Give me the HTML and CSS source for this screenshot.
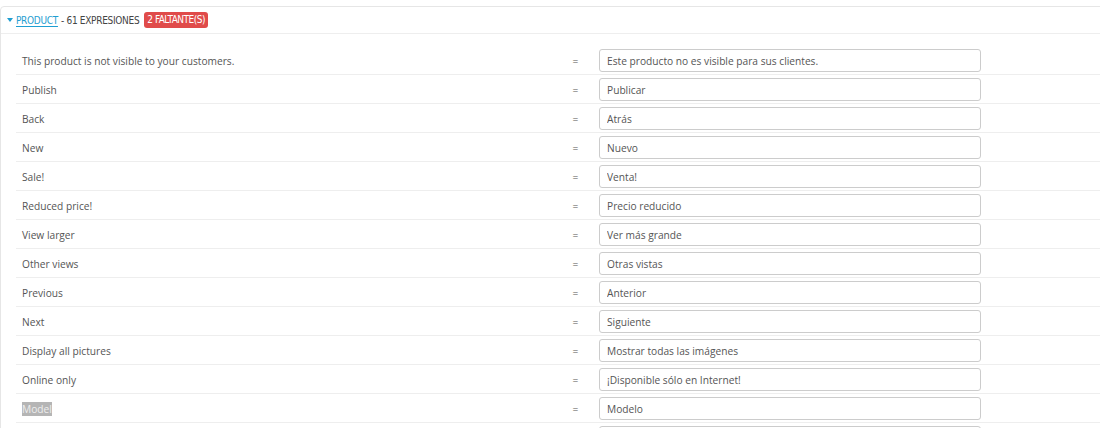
FILE: index.html
```html
<!DOCTYPE html>
<html lang="es">
<head>
    <meta charset="UTF-8">
    <title>Traducciones - product</title>
    <link rel="stylesheet" href="styles.css">
</head>
<body>

    <div class="panel">
        <div class="panel-heading">
            <a href="#" class="toggle"><span class="caret"></span><span class="module-name">PRODUCT</span></a>
            <span class="count">- 61 EXPRESIONES</span>
            <span class="badge-missing">2 FALTANTE(S)</span>
        </div>

        <table class="tr-table">
            <tr>
                <td class="src">This product is not visible to your customers.</td>
                <td class="eq">=</td>
                <td class="dst"><input type="text" value="Este producto no es visible para sus clientes."></td>
            </tr>
            <tr>
                <td class="src">Publish</td>
                <td class="eq">=</td>
                <td class="dst"><input type="text" value="Publicar"></td>
            </tr>
            <tr>
                <td class="src">Back</td>
                <td class="eq">=</td>
                <td class="dst"><input type="text" value="Atrás"></td>
            </tr>
            <tr>
                <td class="src">New</td>
                <td class="eq">=</td>
                <td class="dst"><input type="text" value="Nuevo"></td>
            </tr>
            <tr>
                <td class="src">Sale!</td>
                <td class="eq">=</td>
                <td class="dst"><input type="text" value="Venta!"></td>
            </tr>
            <tr>
                <td class="src">Reduced price!</td>
                <td class="eq">=</td>
                <td class="dst"><input type="text" value="Precio reducido"></td>
            </tr>
            <tr>
                <td class="src">View larger</td>
                <td class="eq">=</td>
                <td class="dst"><input type="text" value="Ver más grande"></td>
            </tr>
            <tr>
                <td class="src">Other views</td>
                <td class="eq">=</td>
                <td class="dst"><input type="text" value="Otras vistas"></td>
            </tr>
            <tr>
                <td class="src">Previous</td>
                <td class="eq">=</td>
                <td class="dst"><input type="text" value="Anterior"></td>
            </tr>
            <tr>
                <td class="src">Next</td>
                <td class="eq">=</td>
                <td class="dst"><input type="text" value="Siguiente"></td>
            </tr>
            <tr>
                <td class="src">Display all pictures</td>
                <td class="eq">=</td>
                <td class="dst"><input type="text" value="Mostrar todas las imágenes"></td>
            </tr>
            <tr>
                <td class="src">Online only</td>
                <td class="eq">=</td>
                <td class="dst"><input type="text" value="¡Disponible sólo en Internet!"></td>
            </tr>
            <tr>
                <td class="src"><span class="selected">Model</span></td>
                <td class="eq">=</td>
                <td class="dst"><input type="text" value="Modelo"></td>
            </tr>
            <tr>
                <td class="src"></td>
                <td class="eq"></td>
                <td class="dst"><input type="text" value=""></td>
            </tr>
        </table>
    </div>

</body>
</html>
```

FILE: styles.css
```css
body {
    font-family: 'Open Sans', Arial, sans-serif;
    font-size: 10.2px;
    margin: 0;
    padding: 6px 0 0 0;
    background-color: #fff;
    color: #555;
    overflow: hidden;
}

.panel {
    width: 1120px;
    border: 1px solid #e6e6e6;
    border-radius: 4px;
    background-color: #fff;
}

.panel-heading {
    height: 26px;
    display: flex;
    align-items: center;
    padding-left: 6px;
    border-bottom: 1px solid #eee;
    font-family: 'DejaVu Sans Condensed', 'DejaVu Sans', sans-serif;
    font-stretch: condensed;
    font-size: 10px;
    letter-spacing: -0.3px;
    color: #444;
    text-transform: uppercase;
}

.toggle {
    display: flex;
    align-items: center;
    color: #1f9ed1;
    text-decoration: none;
}

.module-name {
    text-decoration: underline;
    text-underline-offset: 2px;
}

.caret {
    width: 0;
    height: 0;
    margin-right: 3px;
    border-left: 3px solid transparent;
    border-right: 3px solid transparent;
    border-top: 4px solid #1f9ed1;
}

.count {
    margin-left: 3px;
}

.badge-missing {
    margin-left: 5px;
    padding: 1px 3px;
    line-height: 14px;
    letter-spacing: -0.5px;
    background-color: #e04b4a;
    color: #fff;
    border-radius: 3px;
}

.tr-table {
    margin: 12px 0 0 15px;
    width: 1104px;
    border-collapse: collapse;
}

.tr-table td {
    border-bottom: 1px solid #eee;
    padding: 3px 0 2px 0;
    height: 23px;
    vertical-align: middle;
}

.tr-table .src {
    width: 536px;
    padding-left: 6px;
}

.tr-table .eq {
    width: 35px;
    padding-right: 6px;
    text-align: center;
}

.tr-table input {
    display: block;
    width: 382px;
    height: 23px;
    box-sizing: border-box;
    margin: 0;
    padding: 0 7px;
    border: 1px solid #ccc;
    border-radius: 3px;
    font-family: 'Open Sans', Arial, sans-serif;
    font-size: 10.2px;
    color: #555;
    background-color: #fff;
}

.selected {
    background-color: #b5b5b5;
    color: #eee;
}
```
